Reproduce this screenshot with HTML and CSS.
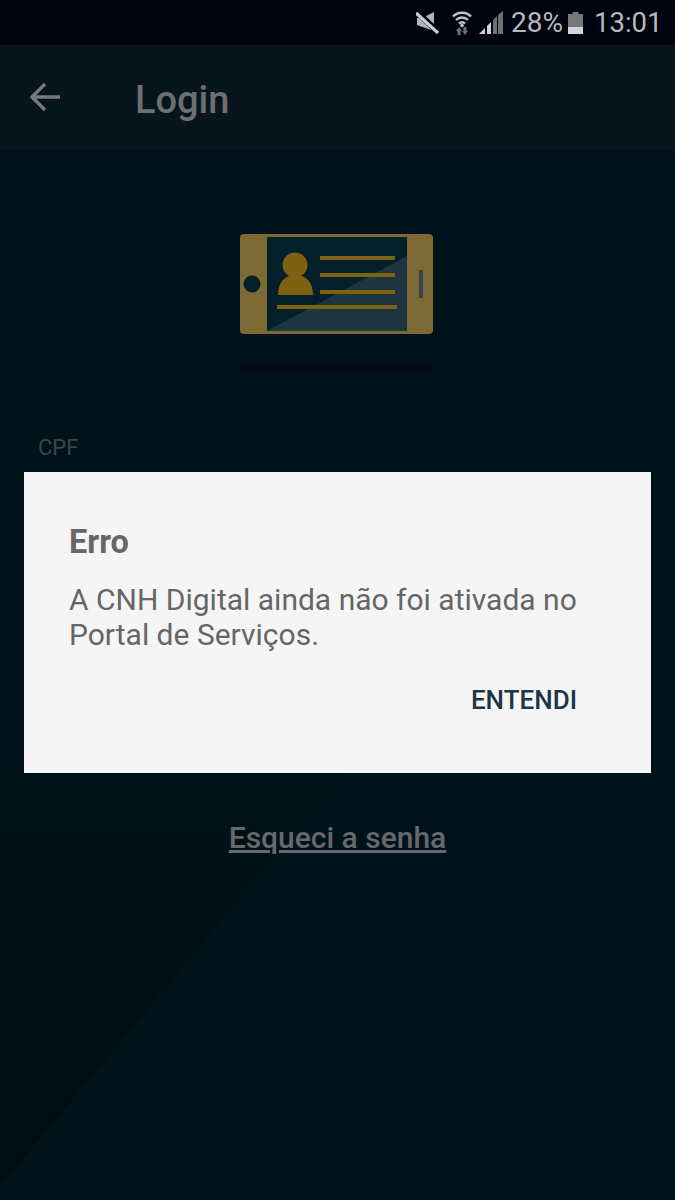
FILE: index.html
```html
<!doctype html>
<html lang="pt">
<head>
    <meta charset="utf-8">
    <title>Login</title>
    <link rel="stylesheet" href="styles.css">
</head>
<body>
    <div class="screen">
        <div class="stripe"></div>

        <div class="status">
            <svg class="ic-mute" width="23" height="23" viewBox="0 0 23 23">
                <path d="M1 7h5l12-6v19L1 14z" fill="#b0b4b7"/>
                <path d="M0 0l23 22" stroke="#00040f" stroke-width="6"/>
                <path d="M0 2l22 20" stroke="#c8ccce" stroke-width="3.200"/>
            </svg>
            <svg class="ic-wifi" width="20" height="25" viewBox="0 0 20 25">
                <g fill="none" stroke="#c0c4c6" stroke-width="2.400">
                    <path d="M1 6.500c5-5 13-5 18 0"/>
                    <path d="M4 10c3.400-3.300 8.600-3.300 12 0"/>
                    <path d="M7 13.500c1.800-1.600 4.200-1.600 6 0"/>
                </g>
                <circle cx="10" cy="15.500" r="1.800" fill="#c0c4c6"/>
                <path d="M7 17l3 4H8.500v4h-3v-4H4zM13 25l-3-4h1.500v-4h3v4H16z" fill="#6c7073"/>
            </svg>
            <svg class="ic-signal" width="24" height="23" viewBox="0 0 24 23">
                <path d="M0 23l6-6v6z" fill="#d0d3d5"/>
                <path d="M8 23v-8l4-4v12z" fill="#d0d3d5"/>
                <path d="M14 23V9l4-4v18zM19 23V4l5-4v23z" fill="#6c7073"/>
            </svg>
            <span class="pct">28%</span>
            <svg class="ic-batt" width="15" height="22" viewBox="0 0 15 22">
                <path d="M4.500 0h6v2H15v20H0V2h4.500z" fill="#75797c"/>
                <rect y="15" width="15" height="7" fill="#d4d7d9"/>
            </svg>
            <span class="clock">13:01</span>
        </div>

        <div class="toolbar">
            <svg class="back" width="31" height="30" viewBox="0 0 31 30">
                <path d="M30 15H3M15 2L2 15l13 13" fill="none" stroke="#75797b" stroke-width="3.400"/>
            </svg>
            <span class="title">Login</span>
        </div>

        <div class="content">
            <svg class="logo" width="204" height="150" viewBox="236 230 204 150">
                <defs>
                    <linearGradient id="shade" x1="0" y1="0" x2="0" y2="1">
                        <stop offset="0" stop-color="#000c11" stop-opacity="0"/>
                        <stop offset=".5" stop-color="#000c11"/>
                        <stop offset="1" stop-color="#000c11" stop-opacity="0"/>
                    </linearGradient>
                </defs>
                <rect x="240" y="234" width="193" height="100" rx="4" fill="#7c6934"/>
                <rect x="267" y="237" width="140" height="94" fill="#03202b"/>
                <path d="M407 256v75H267z" fill="#1e3440"/>
                <circle cx="252" cy="284" r="8.500" fill="#03202b"/>
                <rect x="419" y="270" width="4" height="28" fill="#33454e"/>
                <circle cx="295" cy="265" r="12.500" fill="#7f6211"/>
                <path d="M278 295c0-13 7-20 17.500-20s17.500 7 17.500 20z" fill="#7f6211"/>
                <g fill="#7f6211">
                    <rect x="320" y="256" width="75" height="4"/>
                    <rect x="320" y="273" width="75" height="4"/>
                    <rect x="320" y="290" width="75" height="4"/>
                    <rect x="277" y="305" width="120" height="4"/>
                </g>
                <rect x="240" y="360" width="192" height="16" rx="8" fill="url(#shade)"/>
            </svg>
            <div class="label">CPF</div>
            <a class="forgot" href="#">Esqueci a senha</a>
        </div>

        <div class="dialog">
            <h2>Erro</h2>
            <p>A CNH Digital ainda não foi ativada no Portal de Serviços.</p>
            <div class="actions"><button>ENTENDI</button></div>
        </div>
    </div>
</body>
</html>
```

FILE: styles.css
```css
* {
    box-sizing: border-box;
}

html, body {
    margin: 0;
    padding: 0;
}

body {
    width: 675px;
    height: 1200px;
    overflow: hidden;
    background: #00131b;
    font-family: Roboto, "Liberation Sans", sans-serif;
}

.screen {
    position: relative;
    width: 675px;
    height: 1200px;
    overflow: hidden;
}

/* darker corner of the wallpaper, only shows under the dialog */
.stripe {
    position: absolute;
    inset: 0;
    background: linear-gradient(to bottom, #00131b 700px, #001118 800px, #000d13 1200px);
    clip-path: polygon(0 600px, 488px 600px, 336px 783px, 0 1187px);
}

.status {
    position: relative;
    display: flex;
    align-items: center;
    height: 45px;
    padding-left: 416px;
    background: #00040f;
    color: #b6babd;
}

.status .ic-wifi {
    margin-left: 13px;
}

.status .ic-signal {
    margin-left: 7px;
}

.pct {
    margin-left: 8px;
    font-size: 28px;
    line-height: 45px;
}

.status .ic-batt {
    margin-left: 5px;
}

.clock {
    margin-left: 11px;
    font-size: 27.500px;
    line-height: 45px;
}

.toolbar {
    position: relative;
    display: flex;
    align-items: center;
    height: 105px;
    padding-left: 30px;
    background: #08151c;
}

.back {
    margin-top: -1px;
}

.title {
    margin: 4px 0 0 74px;
    font-size: 38px;
    font-weight: 500;
    color: #6c7073;
}

.content {
    position: relative;
    display: flex;
    flex-direction: column;
}

.logo {
    margin: 80px 0 0 236px;
}

.label {
    margin: 56px 0 0 38px;
    font-size: 22px;
    line-height: 24px;
    color: #3c4549;
}

.forgot {
    align-self: center;
    margin-top: 360px;
    font-size: 30px;
    font-weight: 500;
    line-height: 36px;
    color: #66696c;
}

.dialog {
    position: absolute;
    left: 24px;
    top: 472px;
    width: 627px;
    height: 301px;
    padding: 51px 45px 0;
    background: #f5f5f5;
    color: #666;
}

.dialog h2 {
    margin: 0;
    font-size: 32.500px;
    font-weight: 700;
    line-height: 38px;
}

.dialog p {
    margin: 21px 0 0;
    font-size: 30px;
    line-height: 35px;
}

.actions {
    display: flex;
    justify-content: flex-end;
    margin-top: 33px;
    padding-right: 29px;
}

.actions button {
    padding: 0;
    border: 0;
    background: none;
    font-family: inherit;
    font-size: 26px;
    font-weight: 500;
    color: #1b3646;
}
```
